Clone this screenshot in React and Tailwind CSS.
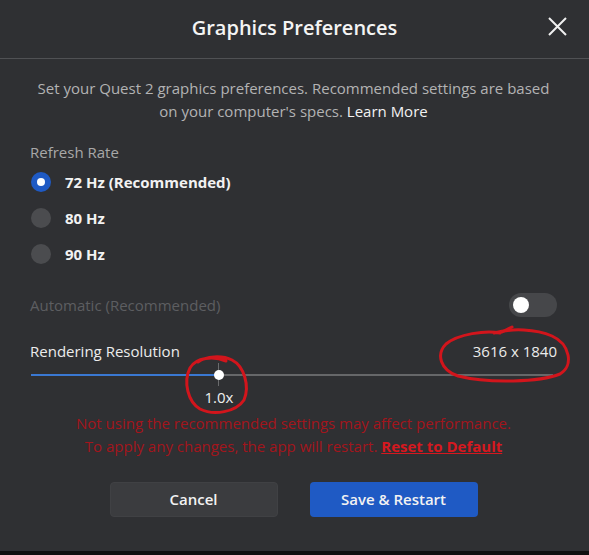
import React, { useState } from 'react';

const rates = ['72 Hz (Recommended)', '80 Hz', '90 Hz'];

const App = () => {
  const [rate, setRate] = useState(0);
  const [auto, setAuto] = useState(false);
  const scale = 0.36;

  return (
    <div
      className="relative w-full h-[555px] bg-[#2f3033] border-b-4 border-[#101010] flex flex-col text-[15px]"
      style={{ fontFamily: '"Open Sans", "Noto Sans", sans-serif' }}
    >
      {/* Header */}
      <div className="relative h-[59px] shrink-0 flex items-center justify-center border-b border-[#505154]">
        <h1 className="text-[20px] font-semibold text-[#f4f4f4] -mt-[3px]">Graphics Preferences</h1>
        <button className="absolute right-[22px] top-[17px] w-[19px] h-[19px] text-[#f0f0f0]">
          <svg viewBox="0 0 19 19" className="w-full h-full" fill="none" stroke="currentColor" strokeWidth="2">
            <path d="M1 1 L18 18 M18 1 L1 18" />
          </svg>
        </button>
      </div>

      <div className="flex flex-col pl-[30px] pr-[32px]">
        {/* Description */}
        <p className="mt-[18px] text-center leading-[23px] text-[#b3b3b3] whitespace-nowrap">
          Set your Quest 2 graphics preferences. Recommended settings are based
          <br />
          on your computer's specs. <span className="text-[#f2f2f2]">Learn More</span>
        </p>

        {/* Refresh rate */}
        <div className="mt-[18px] leading-[23px] text-[#a8a8a8]">Refresh Rate</div>
        <div className="flex flex-col">
          {rates.map((r, i) => (
            <label key={r} className="h-[36px] flex items-center gap-[14px] cursor-pointer" onClick={() => setRate(i)}>
              {rate === i ? (
                <span className="ml-[1px] w-[20px] h-[20px] rounded-full bg-[#1f5ac4] flex items-center justify-center">
                  <span className="w-[8px] h-[8px] rounded-full bg-white" />
                </span>
              ) : (
                <span className="ml-[1px] w-[20px] h-[20px] rounded-full bg-[#4b4c4f]" />
              )}
              <span className="font-bold text-[#f2f2f2]">{r}</span>
            </label>
          ))}
        </div>

        {/* Automatic */}
        <div className="mt-[21px] h-[24px] flex items-center justify-between">
          <span className="text-[#5d5e61]">Automatic (Recommended)</span>
          <button
            onClick={() => setAuto(!auto)}
            className="w-[48px] h-[24px] rounded-full bg-[#46474a] flex items-center px-[4px]"
          >
            <span className="w-[16px] h-[16px] rounded-full bg-white" />
          </button>
        </div>

        {/* Rendering resolution */}
        <div className="mt-[23px] flex items-center justify-between leading-[23px] text-[#ececec]">
          <span>Rendering Resolution</span>
          <span>3616 x 1840</span>
        </div>
        <div className="relative h-[49px] ml-[1px] mr-[4px]">
          <div className="absolute left-0 right-0 top-[11px] h-[2px] bg-[#666769]" />
          <div className="absolute left-0 top-[11px] h-[2px] bg-[#3a78d2]" style={{ width: `${scale * 100}%` }} />
          <div className="absolute top-0 h-[24px] w-0" style={{ left: `${scale * 100}%` }}>
            <div className="absolute -left-[1px] top-0 w-[1px] h-[23px] bg-[#6a6b6d]" />
            <div className="absolute -left-[5px] top-[7px] w-[10px] h-[10px] rounded-full bg-white" />
            <div className="absolute -left-[20px] top-[23px] w-[40px] text-center leading-[22px] text-[#eeeeee]">1.0x</div>
          </div>
        </div>

        {/* Warning */}
        <p className="text-center leading-[23px] text-[#a3151c] whitespace-nowrap">
          Not using the recommended settings may affect performance.
          <br />
          To apply any changes, the app will restart.{' '}
          <span className="font-bold underline text-[#d6181f]">Reset to Default</span>
        </p>

        {/* Buttons */}
        <div className="mt-[24px] flex justify-center gap-[32px]">
          <button className="w-[168px] h-[35px] rounded-[4px] bg-[#3b3c3f] border border-[#404144] font-semibold text-[#f2f2f2]">
            Cancel
          </button>
          <button className="w-[168px] h-[35px] rounded-[4px] bg-[#1f5ac4] font-semibold text-[#f2f2f2]">
            Save &amp; Restart
          </button>
        </div>
      </div>

      {/* Hand-drawn red annotations */}
      <svg className="absolute inset-0 pointer-events-none" width="589" height="555" fill="none" stroke="#d2151c" strokeWidth="3" strokeLinecap="round">
        <path d="M500 333 C486 330 458 334 446 344 C436 354 440 370 458 376 C490 384 540 382 560 374 C574 366 570 344 552 336 C536 329 512 328 494 333" />
        <path d="M502 332 L512 327" />
        <path d="M226 361 C214 356 196 357 190 368 C183 382 188 402 200 409 C214 416 236 412 244 400 C250 386 244 366 232 360 C222 355 206 356 198 362" />
      </svg>
    </div>
  );
};

export default App;
